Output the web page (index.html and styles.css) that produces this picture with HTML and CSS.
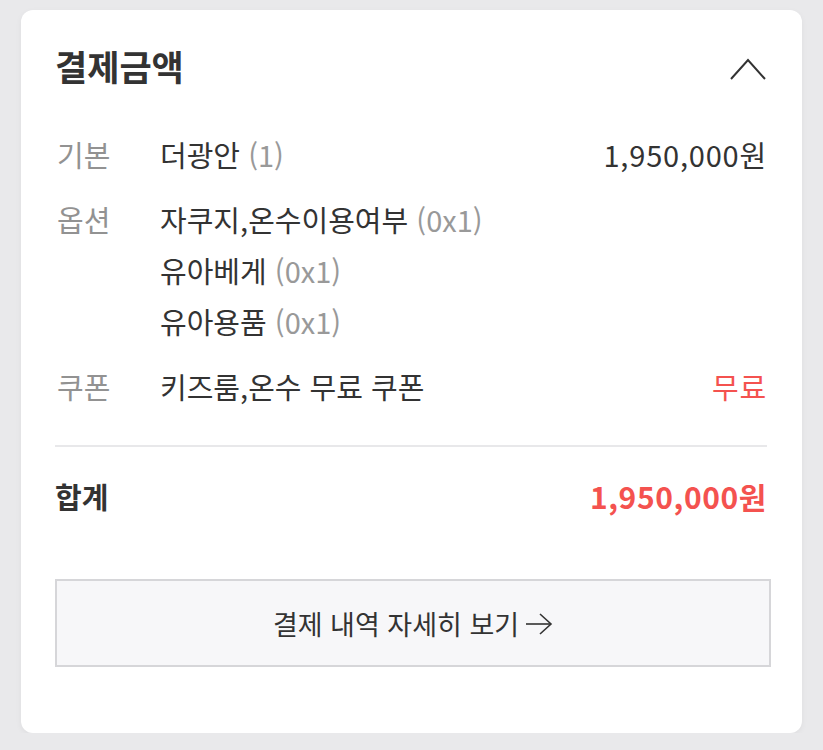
FILE: index.html
```html
<!DOCTYPE html>
<html lang="ko">
<head>
    <meta charset="UTF-8">
    <meta name="viewport" content="width=device-width, initial-scale=1.0">
    <title>결제금액</title>
    <link rel="stylesheet" href="styles.css">
</head>
<body>
    <div class="card">
        <div class="card-head">
            <h2 class="title">결제금액</h2>
            <svg class="chevron" width="36" height="22" viewBox="0 0 36 22">
                <polyline points="1,21 18,2 35,21" fill="none" stroke="#333" stroke-width="2"/>
            </svg>
        </div>

        <div class="rows">
            <div class="row">
                <div class="label">기본</div>
                <div class="items">
                    <div class="item">더광안 <span class="qty">(1)</span></div>
                </div>
                <div class="price">1,950,000원</div>
            </div>
            <div class="row">
                <div class="label">옵션</div>
                <div class="items">
                    <div class="item">자쿠지,온수이용여부 <span class="qty">(0x1)</span></div>
                    <div class="item">유아베게 <span class="qty">(0x1)</span></div>
                    <div class="item">유아용품 <span class="qty">(0x1)</span></div>
                </div>
            </div>
            <div class="row">
                <div class="label">쿠폰</div>
                <div class="items">
                    <div class="item">키즈룸,온수 무료 쿠폰</div>
                </div>
                <div class="price red">무료</div>
            </div>
        </div>

        <div class="divider"></div>

        <div class="total">
            <div class="total-label">합계</div>
            <div class="total-price">1,950,000원</div>
        </div>

        <button class="detail-btn">
            결제 내역 자세히 보기
            <svg class="arrow" width="28" height="24" viewBox="0 0 28 24">
                <line x1="1" y1="12" x2="26" y2="12" stroke="#333" stroke-width="1.6"/>
                <polyline points="15,2 26,12 15,22" fill="none" stroke="#333" stroke-width="1.6"/>
            </svg>
        </button>
    </div>
</body>
</html>
```

FILE: styles.css
```css
body {
    margin: 0;
    background-color: #e9e9eb;
    font-family: "Noto Sans CJK KR", "Noto Sans", sans-serif;
    color: #333;
}
.card {
    margin: 10px 21px 0 21px;
    width: 781px;
    box-sizing: border-box;
    height: 723px;
    background-color: #fff;
    border-radius: 12px;
    padding: 36px 35px 0 34px;
    box-shadow: 0 2px 6px rgba(0, 0, 0, 0.05);
}
.card-head {
    display: flex;
    justify-content: space-between;
    align-items: center;
    height: 40px;
}
.title {
    margin: 0;
    font-size: 35px;
    font-weight: 700;
    line-height: 40px;
    color: #333;
}
.chevron {
    margin-right: 1px;
    margin-top: 6px;
}
.rows {
    margin-top: 43px;
    display: flex;
    flex-direction: column;
    gap: 14px;
}
.row {
    display: flex;
    align-items: flex-start;
    font-size: 29px;
    line-height: 51px;
}
.label {
    width: 105px;
    padding-left: 2px;
    box-sizing: border-box;
    color: #929292;
}
.items {
    flex: 1;
}
.item {
    color: #333;
}
.qty {
    color: #999;
}
.price {
    color: #333;
    letter-spacing: 0.8px;
}
.red {
    color: #f4524f;
}
.divider {
    margin-top: 33px;
    height: 2px;
    background-color: #e8e8ea;
}
.total {
    margin-top: 24px;
    display: flex;
    justify-content: space-between;
    align-items: center;
    line-height: 51px;
}
.total-label {
    font-size: 29px;
    font-weight: 700;
    color: #333;
}
.total-price {
    font-size: 30px;
    font-weight: 700;
    letter-spacing: 0.6px;
    color: #f4524f;
}
.detail-btn {
    margin-top: 57px;
    width: calc(100% + 4px);
    height: 88px;
    display: flex;
    justify-content: center;
    align-items: center;
    gap: 6px;
    background-color: #f7f7f9;
    border: 2px solid #d6d6d9;
    font-family: "Noto Sans CJK KR", "Noto Sans", sans-serif;
    font-size: 27px;
    color: #333;
    padding: 0;
}
.arrow {
    margin-top: 2px;
}
```
